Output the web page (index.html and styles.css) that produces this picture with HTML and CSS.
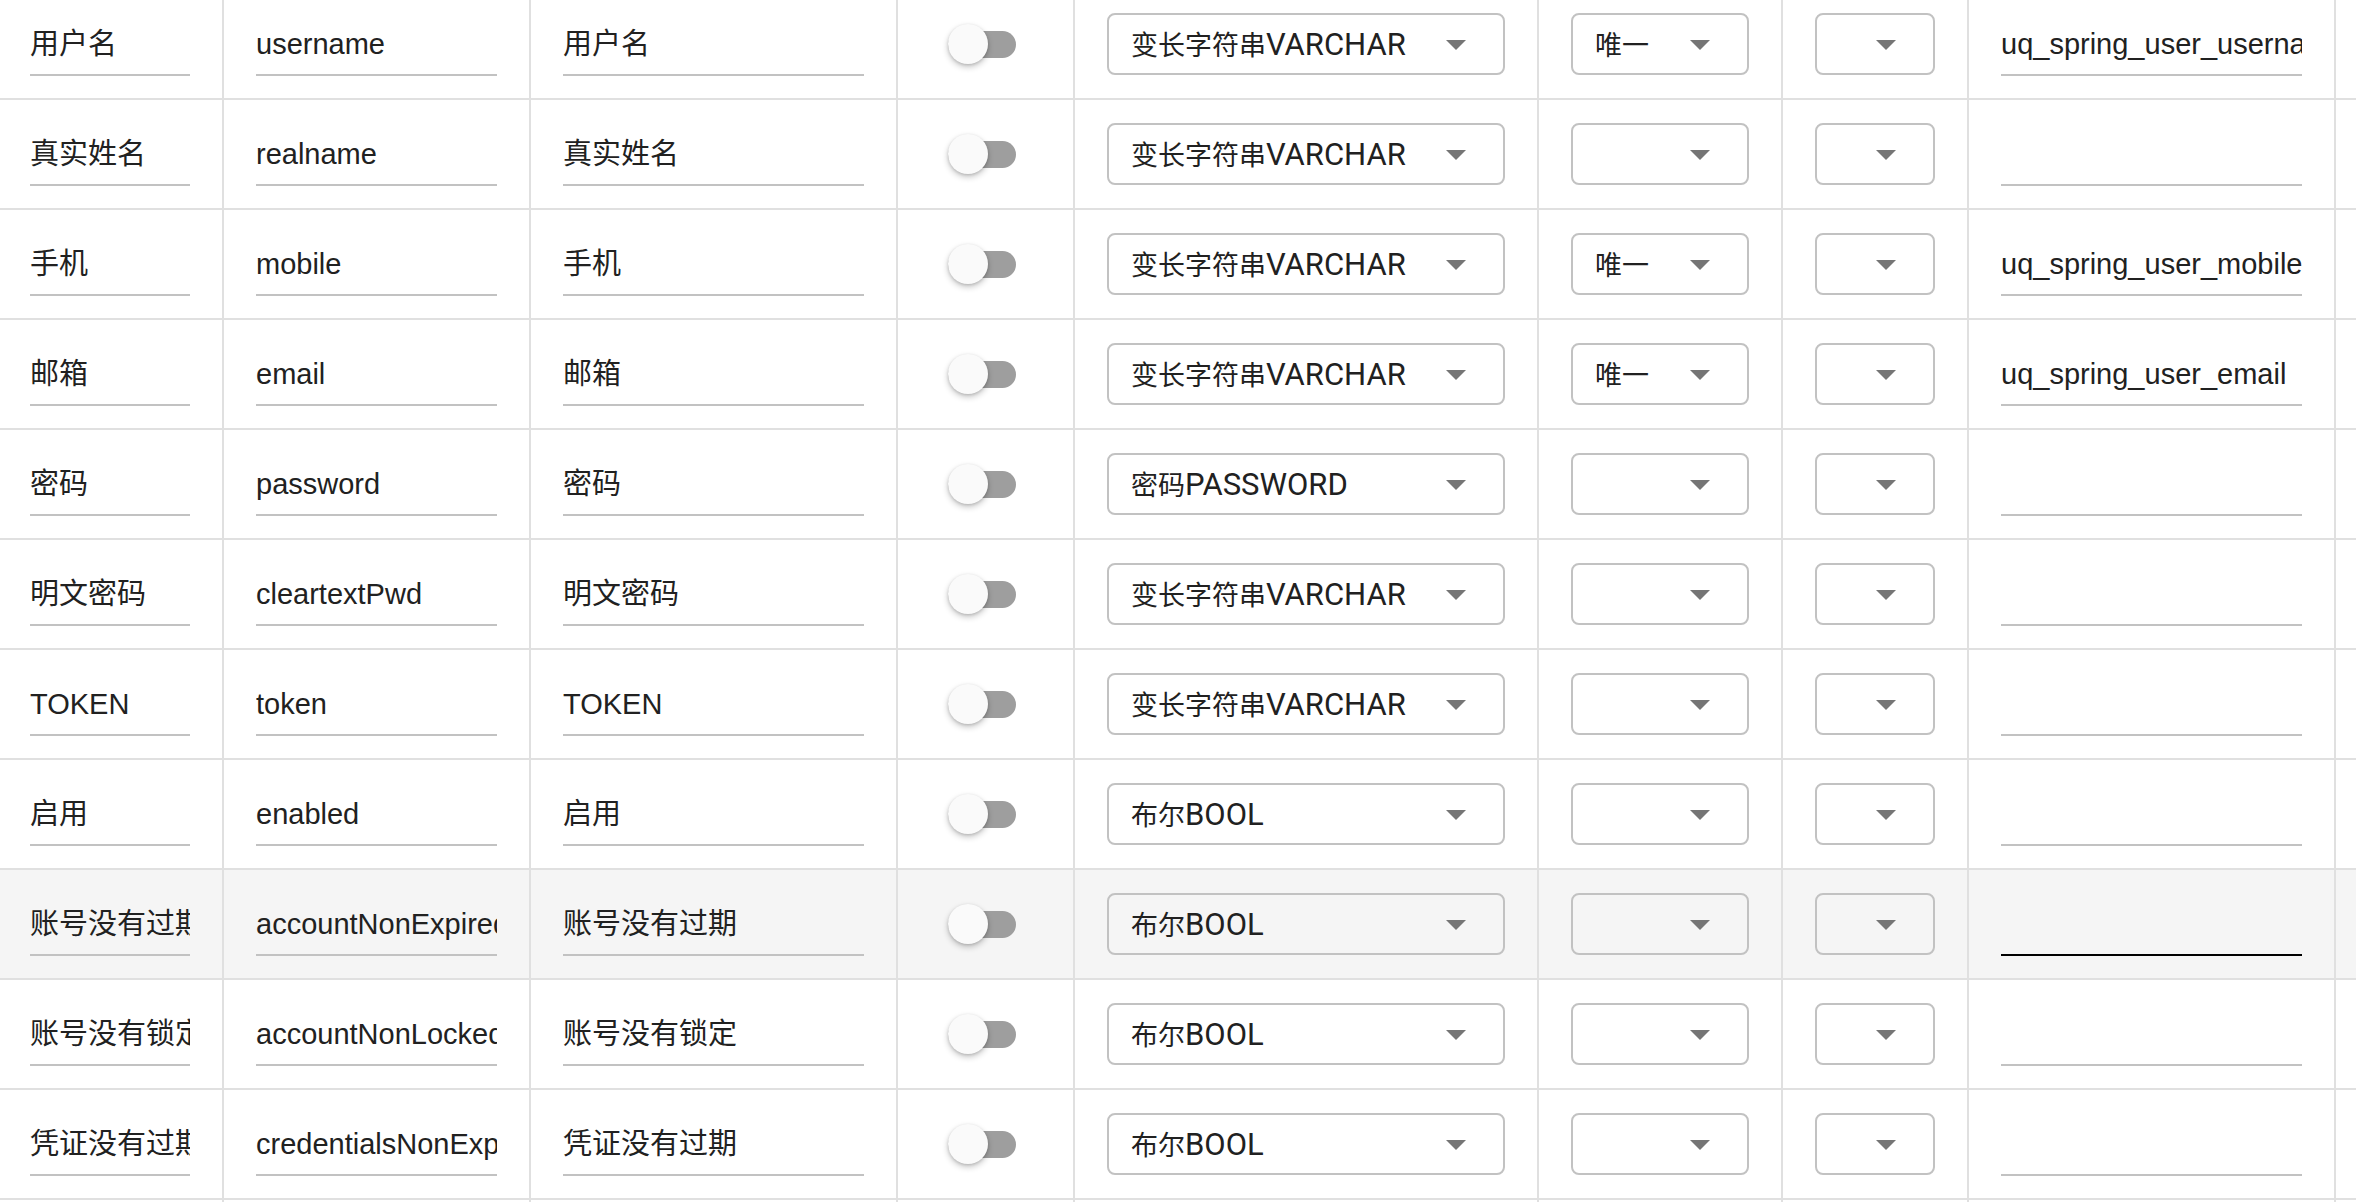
FILE: index.html
```html
<!DOCTYPE html>
<html lang="zh-CN">
<head>
<meta charset="utf-8">
<title>字段</title>
<link rel="stylesheet" href="styles.css">
</head>
<body>
<div class="table">
  <div class="row">
    <div class="cell"><div class="field">用户名</div></div>
    <div class="cell"><div class="field">username</div></div>
    <div class="cell"><div class="field">用户名</div></div>
    <div class="cell cell-toggle"><div class="toggle"><span class="track"></span><span class="knob"></span></div></div>
    <div class="cell"><div class="select"><span class="val"><span class="cn">变长字符串</span>VARCHAR</span><span class="arrow"></span></div></div>
    <div class="cell"><div class="select"><span class="val"><span class="cn">唯一</span></span><span class="arrow"></span></div></div>
    <div class="cell"><div class="select"><span class="val"></span><span class="arrow"></span></div></div>
    <div class="cell"><div class="field">uq_spring_user_username</div></div>
    <div class="cell cell-last"></div>
  </div>
  <div class="row">
    <div class="cell"><div class="field">真实姓名</div></div>
    <div class="cell"><div class="field">realname</div></div>
    <div class="cell"><div class="field">真实姓名</div></div>
    <div class="cell cell-toggle"><div class="toggle"><span class="track"></span><span class="knob"></span></div></div>
    <div class="cell"><div class="select"><span class="val"><span class="cn">变长字符串</span>VARCHAR</span><span class="arrow"></span></div></div>
    <div class="cell"><div class="select"><span class="val"></span><span class="arrow"></span></div></div>
    <div class="cell"><div class="select"><span class="val"></span><span class="arrow"></span></div></div>
    <div class="cell"><div class="field"></div></div>
    <div class="cell cell-last"></div>
  </div>
  <div class="row">
    <div class="cell"><div class="field">手机</div></div>
    <div class="cell"><div class="field">mobile</div></div>
    <div class="cell"><div class="field">手机</div></div>
    <div class="cell cell-toggle"><div class="toggle"><span class="track"></span><span class="knob"></span></div></div>
    <div class="cell"><div class="select"><span class="val"><span class="cn">变长字符串</span>VARCHAR</span><span class="arrow"></span></div></div>
    <div class="cell"><div class="select"><span class="val"><span class="cn">唯一</span></span><span class="arrow"></span></div></div>
    <div class="cell"><div class="select"><span class="val"></span><span class="arrow"></span></div></div>
    <div class="cell"><div class="field">uq_spring_user_mobile</div></div>
    <div class="cell cell-last"></div>
  </div>
  <div class="row">
    <div class="cell"><div class="field">邮箱</div></div>
    <div class="cell"><div class="field">email</div></div>
    <div class="cell"><div class="field">邮箱</div></div>
    <div class="cell cell-toggle"><div class="toggle"><span class="track"></span><span class="knob"></span></div></div>
    <div class="cell"><div class="select"><span class="val"><span class="cn">变长字符串</span>VARCHAR</span><span class="arrow"></span></div></div>
    <div class="cell"><div class="select"><span class="val"><span class="cn">唯一</span></span><span class="arrow"></span></div></div>
    <div class="cell"><div class="select"><span class="val"></span><span class="arrow"></span></div></div>
    <div class="cell"><div class="field">uq_spring_user_email</div></div>
    <div class="cell cell-last"></div>
  </div>
  <div class="row">
    <div class="cell"><div class="field">密码</div></div>
    <div class="cell"><div class="field">password</div></div>
    <div class="cell"><div class="field">密码</div></div>
    <div class="cell cell-toggle"><div class="toggle"><span class="track"></span><span class="knob"></span></div></div>
    <div class="cell"><div class="select"><span class="val"><span class="cn">密码</span>PASSWORD</span><span class="arrow"></span></div></div>
    <div class="cell"><div class="select"><span class="val"></span><span class="arrow"></span></div></div>
    <div class="cell"><div class="select"><span class="val"></span><span class="arrow"></span></div></div>
    <div class="cell"><div class="field"></div></div>
    <div class="cell cell-last"></div>
  </div>
  <div class="row">
    <div class="cell"><div class="field">明文密码</div></div>
    <div class="cell"><div class="field">cleartextPwd</div></div>
    <div class="cell"><div class="field">明文密码</div></div>
    <div class="cell cell-toggle"><div class="toggle"><span class="track"></span><span class="knob"></span></div></div>
    <div class="cell"><div class="select"><span class="val"><span class="cn">变长字符串</span>VARCHAR</span><span class="arrow"></span></div></div>
    <div class="cell"><div class="select"><span class="val"></span><span class="arrow"></span></div></div>
    <div class="cell"><div class="select"><span class="val"></span><span class="arrow"></span></div></div>
    <div class="cell"><div class="field"></div></div>
    <div class="cell cell-last"></div>
  </div>
  <div class="row">
    <div class="cell"><div class="field">TOKEN</div></div>
    <div class="cell"><div class="field">token</div></div>
    <div class="cell"><div class="field">TOKEN</div></div>
    <div class="cell cell-toggle"><div class="toggle"><span class="track"></span><span class="knob"></span></div></div>
    <div class="cell"><div class="select"><span class="val"><span class="cn">变长字符串</span>VARCHAR</span><span class="arrow"></span></div></div>
    <div class="cell"><div class="select"><span class="val"></span><span class="arrow"></span></div></div>
    <div class="cell"><div class="select"><span class="val"></span><span class="arrow"></span></div></div>
    <div class="cell"><div class="field"></div></div>
    <div class="cell cell-last"></div>
  </div>
  <div class="row">
    <div class="cell"><div class="field">启用</div></div>
    <div class="cell"><div class="field">enabled</div></div>
    <div class="cell"><div class="field">启用</div></div>
    <div class="cell cell-toggle"><div class="toggle"><span class="track"></span><span class="knob"></span></div></div>
    <div class="cell"><div class="select"><span class="val"><span class="cn">布尔</span>BOOL</span><span class="arrow"></span></div></div>
    <div class="cell"><div class="select"><span class="val"></span><span class="arrow"></span></div></div>
    <div class="cell"><div class="select"><span class="val"></span><span class="arrow"></span></div></div>
    <div class="cell"><div class="field"></div></div>
    <div class="cell cell-last"></div>
  </div>
  <div class="row row-hover">
    <div class="cell"><div class="field">账号没有过期</div></div>
    <div class="cell"><div class="field">accountNonExpired</div></div>
    <div class="cell"><div class="field">账号没有过期</div></div>
    <div class="cell cell-toggle"><div class="toggle"><span class="track"></span><span class="knob"></span></div></div>
    <div class="cell"><div class="select"><span class="val"><span class="cn">布尔</span>BOOL</span><span class="arrow"></span></div></div>
    <div class="cell"><div class="select"><span class="val"></span><span class="arrow"></span></div></div>
    <div class="cell"><div class="select"><span class="val"></span><span class="arrow"></span></div></div>
    <div class="cell"><div class="field field-active"></div></div>
    <div class="cell cell-last"></div>
  </div>
  <div class="row">
    <div class="cell"><div class="field">账号没有锁定</div></div>
    <div class="cell"><div class="field">accountNonLocked</div></div>
    <div class="cell"><div class="field">账号没有锁定</div></div>
    <div class="cell cell-toggle"><div class="toggle"><span class="track"></span><span class="knob"></span></div></div>
    <div class="cell"><div class="select"><span class="val"><span class="cn">布尔</span>BOOL</span><span class="arrow"></span></div></div>
    <div class="cell"><div class="select"><span class="val"></span><span class="arrow"></span></div></div>
    <div class="cell"><div class="select"><span class="val"></span><span class="arrow"></span></div></div>
    <div class="cell"><div class="field"></div></div>
    <div class="cell cell-last"></div>
  </div>
  <div class="row">
    <div class="cell"><div class="field">凭证没有过期</div></div>
    <div class="cell"><div class="field">credentialsNonExpired</div></div>
    <div class="cell"><div class="field">凭证没有过期</div></div>
    <div class="cell cell-toggle"><div class="toggle"><span class="track"></span><span class="knob"></span></div></div>
    <div class="cell"><div class="select"><span class="val"><span class="cn">布尔</span>BOOL</span><span class="arrow"></span></div></div>
    <div class="cell"><div class="select"><span class="val"></span><span class="arrow"></span></div></div>
    <div class="cell"><div class="select"><span class="val"></span><span class="arrow"></span></div></div>
    <div class="cell"><div class="field"></div></div>
    <div class="cell cell-last"></div>
  </div>
  <div class="row">
    <div class="cell"><div class="field">创建时间</div></div>
    <div class="cell"><div class="field">createdDate</div></div>
    <div class="cell"><div class="field">创建时间</div></div>
    <div class="cell cell-toggle"><div class="toggle"><span class="track"></span><span class="knob"></span></div></div>
    <div class="cell"><div class="select"><span class="val"><span class="cn">日期时间</span>DATETIME</span><span class="arrow"></span></div></div>
    <div class="cell"><div class="select"><span class="val"></span><span class="arrow"></span></div></div>
    <div class="cell"><div class="select"><span class="val"></span><span class="arrow"></span></div></div>
    <div class="cell"><div class="field"></div></div>
    <div class="cell cell-last"></div>
  </div>
</div>
</body>
</html>
```
FILE: styles.css
```css
html, body {
  margin: 0;
  padding: 0;
  background: #ffffff;
}

body {
  width: 2356px;
  height: 1202px;
  overflow: hidden;
  font-family: "Liberation Sans", "Noto Sans CJK SC", sans-serif;
  font-size: 29px;
  color: #212121;
}

.table {
  margin: -10px 0 0 -2px;
  width: 2600px;
}

.row {
  display: grid;
  grid-template-columns: 226px 307px 367px 177px 464px 244px 186px 367px 200px;
  height: 110px;
  box-sizing: border-box;
  border-bottom: 2px solid #e0e0e0;
  background: #ffffff;
}

.row-hover {
  background: #f5f5f5;
}

.cell {
  box-sizing: border-box;
  border-right: 2px solid #e0e0e0;
  padding: 0 32px;
  display: flex;
  align-items: center;
  min-width: 0;
}

.cell-last {
  border-right: none;
}

.field {
  width: 100%;
  box-sizing: content-box;
  height: 33px;
  line-height: 33px;
  padding: 13px 0 13px;
  margin-top: 3px;
  border-bottom: 2px solid #c2c2c2;
  white-space: nowrap;
  overflow: hidden;
}

.field-active {
  border-bottom-color: #000000;
}

.cell-toggle {
  padding-left: 50px;
}

.toggle {
  position: relative;
  width: 68px;
  height: 40px;
}

.track {
  position: absolute;
  left: 0;
  top: 7px;
  width: 68px;
  height: 27px;
  border-radius: 14px;
  background: #9e9e9e;
}

.knob {
  position: absolute;
  left: 0;
  top: 0;
  width: 40px;
  height: 40px;
  border-radius: 50%;
  background: #fafafa;
  box-shadow: 0 3px 6px rgba(0, 0, 0, 0.22), 0 1px 3px rgba(0, 0, 0, 0.14);
}

.select {
  width: 100%;
  height: 62px;
  box-sizing: border-box;
  border: 2px solid #c2c2c2;
  border-radius: 8px;
  padding: 0 37px 0 22px;
  display: flex;
  align-items: center;
  font-family: Roboto, "Noto Sans CJK SC", sans-serif;
  font-size: 31px;
  color: #212121;
}

.val {
  flex: 1;
  white-space: nowrap;
  overflow: hidden;
  line-height: 36px;
}

.cn {
  font-family: "Noto Sans CJK SC", sans-serif;
  font-size: 27px;
}

.arrow {
  flex: none;
  width: 0;
  height: 0;
  border-left: 10px solid transparent;
  border-right: 10px solid transparent;
  border-top: 10px solid #757575;
  margin-top: 2px;
}
```
